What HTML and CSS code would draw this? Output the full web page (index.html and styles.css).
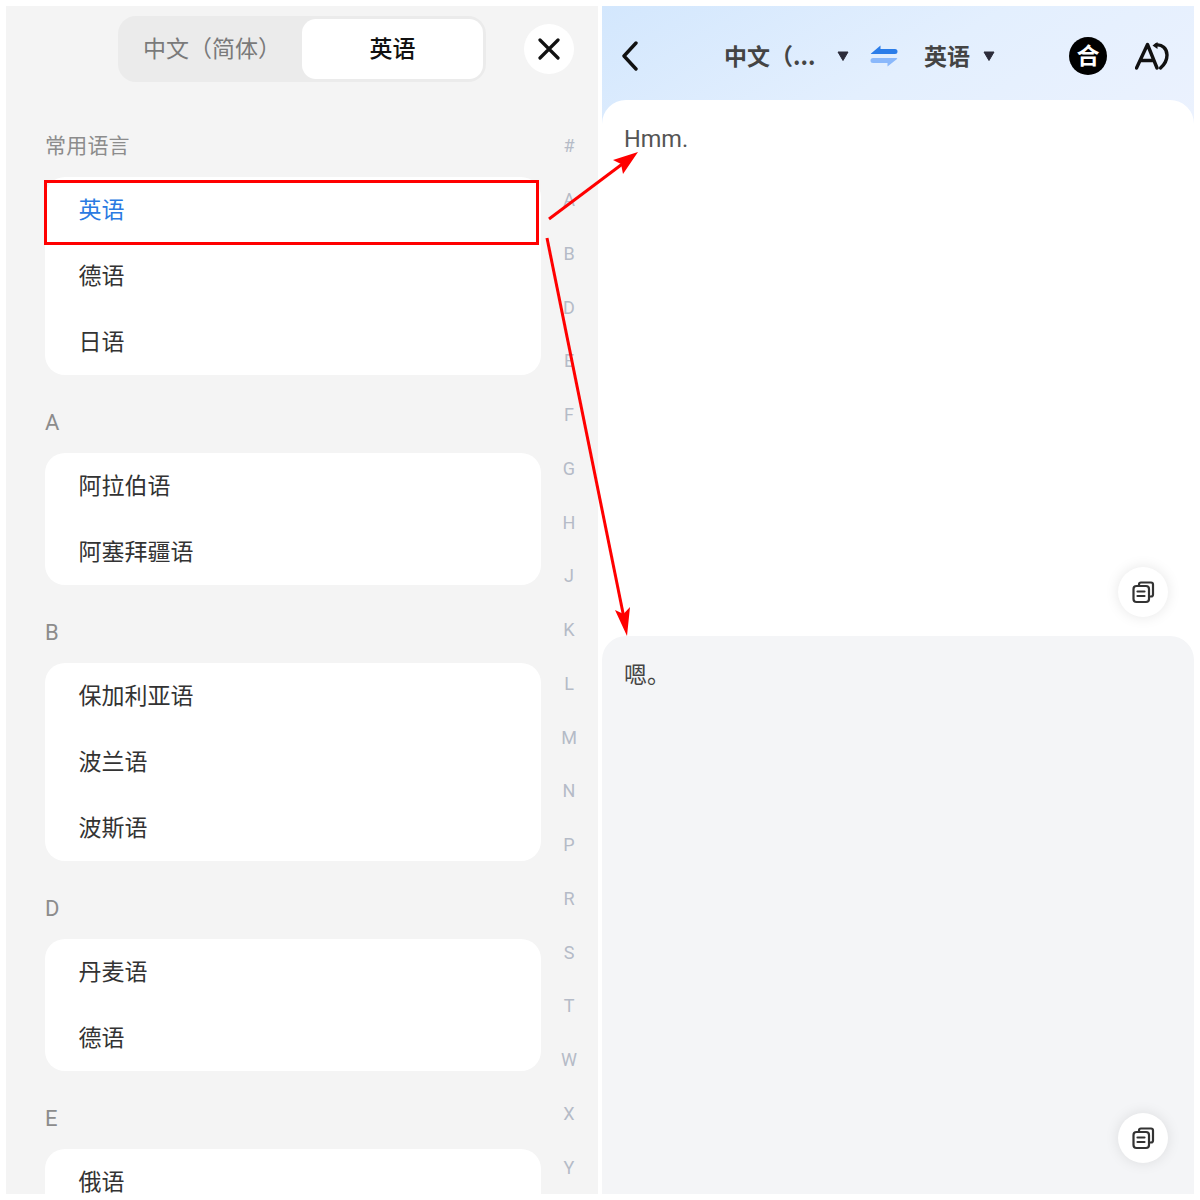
FILE: index.html
```html
<!DOCTYPE html>
<html lang="zh">
<head>
<meta charset="utf-8">
<title>翻译</title>
<link rel="stylesheet" href="styles.css">
</head>
<body>
<div class="page">
  <section class="left">
    <header class="left-head">
      <div class="tabs">
        <div class="tab">中文（简体）</div>
        <div class="tab tab-active">英语</div>
      </div>
      <button class="close" aria-label="关闭">
        <svg width="22" height="22" viewBox="0 0 22 22"><path d="M2 2L20 20M20 2L2 20" class="ico-close"/></svg>
      </button>
    </header>
    <div class="left-body">
      <div class="list">
        <div class="label">常用语言</div>
        <div class="card"><div class="row row-on">英语</div><div class="row">德语</div><div class="row">日语</div></div>
        <div class="label latin">A</div>
        <div class="card"><div class="row">阿拉伯语</div><div class="row">阿塞拜疆语</div></div>
        <div class="label latin">B</div>
        <div class="card"><div class="row">保加利亚语</div><div class="row">波兰语</div><div class="row">波斯语</div></div>
        <div class="label latin">D</div>
        <div class="card"><div class="row">丹麦语</div><div class="row">德语</div></div>
        <div class="label latin">E</div>
        <div class="card"><div class="row">俄语</div></div>
      </div>
      <div class="index">
        <span>#</span><span>A</span><span>B</span><span>D</span><span>E</span><span>F</span><span>G</span><span>H</span><span>J</span><span>K</span><span>L</span><span>M</span><span>N</span><span>P</span><span>R</span><span>S</span><span>T</span><span>W</span><span>X</span><span>Y</span>
      </div>
    </div>
  </section>
  <section class="right">
    <header class="right-head">
      <svg class="back" width="18" height="30" viewBox="0 0 18 30"><path d="M15 2L3 15L15 28" class="ico-back"/></svg>
      <span class="lang lang-src">中文（...</span>
      <svg class="caret caret-src" width="12" height="10" viewBox="0 0 12 10"><path d="M1 1H11L6 9.500Z" class="caret-shape"/></svg>
      <svg class="swap" width="28" height="24" viewBox="0 0 28 24">
        <path d="M1 9.500L10.500 1.500V5H25A2.500 2.500 0 0 1 25 10H2Q0 10 1 9.500Z" fill="#2b7de9"/>
        <path d="M3 14H26Q28 14 27 15L17.500 22.500V19H3A2.500 2.500 0 0 1 3 14Z" fill="#8ab8fb"/>
      </svg>
      <span class="lang">英语</span>
      <svg class="caret caret-dst" width="12" height="10" viewBox="0 0 12 10"><path d="M1 1H11L6 9.500Z" class="caret-shape"/></svg>
      <span class="merge">合</span>
      <svg class="font-ico" width="34" height="30" viewBox="0 0 34 30">
        <path d="M1.500 27L12.500 3.500L22 27M5.500 19.500H19" class="ico-a"/>
        <path d="M21 4C27 3 32 7.500 32 14C32 20 29 24 25.500 27" class="ico-a"/>
        <path d="M17.500 4.500L22.500 1V8Z"/>
      </svg>
    </header>
    <div class="pane pane-top">
      <p class="out-en">Hmm.</p>
      <button class="copy" aria-label="复制">
        <svg width="24" height="24" viewBox="0 0 24 24"><path d="M8 5.500V4.500Q8 2.500 10 2.500H20Q22 2.500 22 4.500V14.500Q22 16.500 20 16.500H18.500" class="ico-copy"/><rect x="2.500" y="6" width="15.500" height="16" rx="3" class="ico-copy"/><path d="M6.500 11.500H13.500M6.500 16H13.500" class="ico-copy"/></svg>
      </button>
    </div>
    <div class="pane pane-bottom">
      <p class="out-zh">嗯。</p>
      <button class="copy copy-low" aria-label="复制">
        <svg width="24" height="24" viewBox="0 0 24 24"><path d="M8 5.500V4.500Q8 2.500 10 2.500H20Q22 2.500 22 4.500V14.500Q22 16.500 20 16.500H18.500" class="ico-copy"/><rect x="2.500" y="6" width="15.500" height="16" rx="3" class="ico-copy"/><path d="M6.500 11.500H13.500M6.500 16H13.500" class="ico-copy"/></svg>
      </button>
    </div>
  </section>
  <svg class="marks" width="1200" height="1200" viewBox="0 0 1200 1200">
    <rect x="45.500" y="181.500" width="492" height="62" class="mark-box"/>
    <path d="M549 219L625 162" class="mark-line"/>
    <path d="M638 152L613 160L621 164L623 174Z" class="mark-head"/>
    <path d="M547 238L624 618" class="mark-line"/>
    <path d="M627 636L615 610L623.500 614L630 607Z" class="mark-head"/>
  </svg>
</div>
</body>
</html>
```

FILE: styles.css
```css
* { box-sizing: border-box; }
html, body { margin: 0; padding: 0; background: #fff; }
body { font-family: "Noto Sans CJK SC", "Noto Sans", sans-serif; color: #333; }
button { border: 0; padding: 0; font: inherit; cursor: pointer; }
p { margin: 0; }

.page { position: relative; width: 1200px; height: 1200px; padding: 6px; display: flex; gap: 4px; overflow: hidden; }

.left { width: 592px; height: 1188px; background: #f4f4f4; overflow: hidden; display: flex; flex-direction: column; }
.left-head { height: 86px; flex: none; padding-left: 112px; display: flex; align-items: center; }
.tabs { width: 368px; height: 66px; padding: 3px; background: #ebebeb; border-radius: 18px; display: flex; }
.tab { flex: 1; padding: 0 0 4px 1px; display: flex; align-items: center; justify-content: center; font-size: 23px; color: #7a7a7a; }
.tab-active { flex: none; width: 181px; padding-left: 0; background: #fff; border-radius: 14px; color: #111; font-weight: 500; }
.close { width: 50px; height: 50px; margin-left: 38px; border-radius: 50%; background: #fff; display: flex; align-items: center; justify-content: center; }
.ico-close { fill: none; stroke: #111; stroke-width: 3.2; stroke-linecap: round; }

.left-body { flex: 1; min-height: 0; display: flex; gap: 8px; padding-left: 39px; }
.list { width: 496px; flex: none; padding-top: 39px; }
.label { height: 30px; line-height: 26px; margin: 32px 0 16px; font-size: 21px; color: #8c8c8c; }
.label:first-child { margin-top: 0; letter-spacing: 0.2px; }
.latin { line-height: 32px; font-family: "Roboto", sans-serif; font-size: 22px; }
.card { background: #fff; border-radius: 20px; }
.row { height: 66px; line-height: 62px; padding-left: 33.500px; font-size: 23px; color: #333; }
.row-on { color: #2a7ae2; }

.index { width: 40px; flex: none; padding-top: 27px; display: grid; grid-auto-rows: 53.75px; justify-items: center; align-items: center; font-family: "Roboto", sans-serif; font-size: 18px; color: #b5bbc7; }

.right { width: 592px; height: 1188px; display: flex; flex-direction: column; overflow: hidden; background: linear-gradient(150deg, #d3e7fd 0%, #e3effe 50%, #ecf2fe 100%) top / 100% 130px no-repeat, #fff; }
.right-head { height: 94px; flex: none; padding: 6px 0 0 19px; display: flex; align-items: center; }
.lang { padding-bottom: 2px; font-size: 23px; font-weight: 700; color: #444; white-space: nowrap; }
.lang-src { width: 100px; margin-left: 85px; }
.caret-shape { fill: #2c2c3a; stroke: #2c2c3a; stroke-width: 1; stroke-linejoin: round; }
.caret-src { margin-left: 13px; }
.swap { margin: 0 26px 0 21px; }
.caret-dst { margin-left: 13px; }
.merge { width: 38px; height: 38px; margin-left: 74px; border-radius: 50%; background: #000; color: #fff; font-size: 23px; font-weight: 700; line-height: 34px; text-align: center; }
.font-ico { margin-left: 28px; fill: #111; }
.ico-a { fill: none; stroke: #111; stroke-width: 3.400; stroke-linecap: round; stroke-linejoin: round; }
.ico-back { fill: none; stroke: #111; stroke-width: 3.400; stroke-linecap: round; stroke-linejoin: round; }

.pane { display: flex; flex-direction: column; border-radius: 24px 24px 0 0; padding-left: 22px; }
.pane-top { height: 536px; flex: none; background: #fff; padding-top: 23px; padding-bottom: 19px; }
.pane-bottom { flex: 1; background: #f4f5f7; padding-top: 21px; padding-bottom: 31px; }
.out-en { font-family: "Roboto", sans-serif; font-size: 23.500px; line-height: 32px; color: #555; }
.out-zh { font-size: 23px; line-height: 32px; color: #444; }
.copy { width: 50px; height: 50px; margin-top: auto; margin-right: 26px; align-self: flex-end; border-radius: 50%; background: #fff; box-shadow: 0 0 14px rgba(0, 0, 0, 0.1); display: flex; align-items: center; justify-content: center; }
.ico-copy { fill: none; stroke: #333; stroke-width: 2.200; stroke-linecap: round; stroke-linejoin: round; }

.marks { position: absolute; left: 0; top: 0; pointer-events: none; }
.mark-box { fill: none; stroke: #f00; stroke-width: 3; }
.mark-line { fill: none; stroke: #f00; stroke-width: 3; }
.mark-head { fill: #f00; }
```
